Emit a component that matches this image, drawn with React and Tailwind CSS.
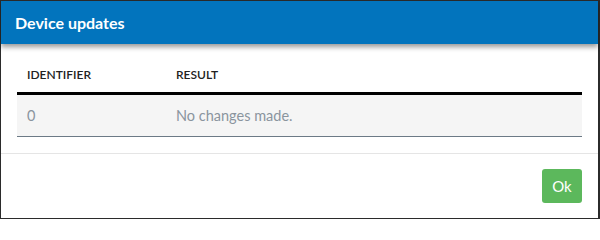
const rows = [{ id: '0', result: 'No changes made.' }];

export default function App() {
  return (
    <div className="w-[600px] h-[219px] bg-white border border-r-2 border-[#2b2b2b] flex flex-col font-['Lato','Open_Sans',sans-serif]">
      {/* Header */}
      <div className="h-[43px] shrink-0 bg-[#0274bd] flex items-center px-[14px] shadow-[0_3px_5px_rgba(0,0,0,0.4)] relative z-10">
        <h2 className="text-white text-[16px] font-bold">Device updates</h2>
      </div>

      {/* Body */}
      <div className="px-4 pt-[14px] pb-4 shrink-0">
        <div className="flex h-[37px] pb-[1px] items-center text-[12px] font-semibold text-[#222] border-b-[3px] border-black">
          <div className="w-[159px] pl-[10px]">IDENTIFIER</div>
          <div>RESULT</div>
        </div>
        {rows.map(row => (
          <div key={row.id} className="flex h-[42px] items-center text-[14.5px] text-[#8a949e] bg-[#f5f5f5] border-b border-[#6c7a86]">
            <div className="w-[159px] pl-[10px]">{row.id}</div>
            <div>{row.result}</div>
          </div>
        ))}
      </div>

      {/* Footer */}
      <div className="border-t border-[#e5e5e5] flex justify-end px-4 pt-[15px]">
        <button type="button" className="w-[40px] h-[34px] rounded-[3px] bg-[#5cb85c] text-white text-[15px] flex items-center justify-center">
          Ok
        </button>
      </div>
    </div>
  );
}
